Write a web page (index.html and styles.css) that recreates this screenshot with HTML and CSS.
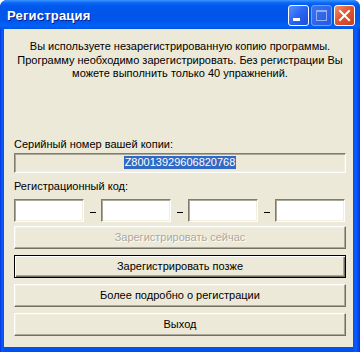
FILE: index.html
```html
<!DOCTYPE html>
<html lang="ru">
<head>
    <meta charset="UTF-8">
    <title>Регистрация</title>
    <link rel="stylesheet" href="styles.css">
</head>
<body>
    <div class="window">
        <div class="titlebar">
            <span class="title">Регистрация</span>
            <div class="title-buttons">
                <div class="tbtn tbtn-min">
                    <svg width="21" height="21" viewBox="0 0 21 21"><rect x="5" y="13" width="7" height="3" fill="#fff"/></svg>
                </div>
                <div class="tbtn tbtn-max">
                    <svg width="21" height="21" viewBox="0 0 21 21"><rect x="5.5" y="5.5" width="10" height="10" fill="none" stroke="#8fb0f0" stroke-width="1"/><rect x="5" y="5" width="11" height="2" fill="#8fb0f0"/></svg>
                </div>
                <div class="tbtn tbtn-close">
                    <svg width="21" height="21" viewBox="0 0 21 21"><path d="M6 6 L15 15 M15 6 L6 15" stroke="#fff" stroke-width="2" stroke-linecap="square"/></svg>
                </div>
            </div>
        </div>

        <div class="client">
            <p class="notice">Вы используете незарегистрированную копию программы. Программу необходимо зарегистрировать. Без регистрации Вы можете выполнить только 40 упражнений.</p>

            <div class="label label-serial">Серийный номер вашей копии:</div>
            <div class="field field-readonly"><span class="selected">Z80013929606820768</span></div>

            <div class="label label-code">Регистрационный код:</div>
            <div class="code-row">
                <div class="field code-box"></div>
                <span class="dash"></span>
                <div class="field code-box"></div>
                <span class="dash"></span>
                <div class="field code-box"></div>
                <span class="dash"></span>
                <div class="field code-box"></div>
            </div>

            <div class="buttons">
                <div class="btn btn-disabled">Зарегистрировать сейчас</div>
                <div class="btn btn-default">Зарегистрировать позже</div>
                <div class="btn">Более подробно о регистрации</div>
                <div class="btn">Выход</div>
            </div>
        </div>
    </div>
</body>
</html>
```

FILE: styles.css
```css
html, body {
    margin: 0;
    padding: 0;
}
body {
    width: 360px;
    height: 352px;
    overflow: hidden;
    background-color: #ffffff;
    font-family: "Liberation Sans", Arial, sans-serif;
    font-size: 11px;
    color: #000;
}
.window {
    width: 360px;
    height: 352px;
    box-sizing: border-box;
    background: linear-gradient(to right, #0831d9 0px, #0a5dff 2px, #0050ee 4px, #0050ee 353px, #0a5dff 356px, #0831d9 360px);
    border-radius: 7px 7px 0 0;
    display: flex;
    flex-direction: column;
}
.titlebar {
    height: 29px;
    flex: none;
    display: flex;
    align-items: center;
    justify-content: space-between;
    padding: 0 5px 0 7px;
    border-radius: 7px 7px 0 0;
    background: linear-gradient(to bottom, #3d95ff 0px, #0a66f5 3px, #0058ee 6px, #0055e8 14px, #0058ee 22px, #0063f8 26px, #0054e3 29px);
}
.title {
    color: #fff;
    font-weight: bold;
    font-size: 13px;
    letter-spacing: 0.2px;
    text-shadow: 1px 1px 0 #0a1e80;
    padding-top: 1px;
}
.title-buttons {
    display: flex;
    gap: 2px;
    padding-top: 1px;
}
.tbtn {
    width: 21px;
    height: 21px;
    box-sizing: border-box;
    border: 1px solid #fff;
    border-radius: 3px;
    overflow: hidden;
}
.tbtn svg {
    display: block;
    margin: -1px;
}
.tbtn-min {
    background: linear-gradient(135deg, #5a8fff 0%, #2a64f0 50%, #1a4fd8 100%);
}
.tbtn-max {
    border-color: #7a9ef0;
    background: linear-gradient(135deg, #3e74f0 0%, #2458e4 100%);
}
.tbtn-close {
    background: linear-gradient(135deg, #f0926c 0%, #e0562f 45%, #c8401c 100%);
}
.client {
    margin: 0 7px 5px 4px;
    flex: 1;
    background-color: #ece9d8;
    padding: 11px 7px 0 10px;
}
.notice {
    margin: 0;
    text-align: center;
    line-height: 13.5px;
    padding: 0 2px;
}
.label {
    line-height: 13px;
}
.label-serial {
    margin-top: 57px;
}
.label-code {
    margin-top: 7px;
}
.field {
    box-sizing: border-box;
    border-top: 1px solid #7f7c6e;
    border-left: 1px solid #7f7c6e;
    border-right: 1px solid #ffffff;
    border-bottom: 1px solid #ffffff;
    box-shadow: inset 1px 1px 0 #aca899, inset -1px -1px 0 #f1efe2;
}
.field-readonly {
    margin-top: 2px;
    height: 20px;
    background-color: #ece9d8;
    display: flex;
    align-items: center;
    justify-content: center;
}
.selected {
    background-color: #316ac5;
    color: #fff;
    line-height: 13px;
    padding: 0 1px;
}
.code-row {
    margin-top: 6px;
    display: flex;
    align-items: center;
    justify-content: space-between;
    padding-right: 1px;
}
.code-box {
    width: 70px;
    height: 23px;
    background-color: #fff;
}
.dash {
    width: 6px;
    height: 1px;
    background-color: #000;
    margin-top: 4px;
}
.buttons {
    margin-top: 4px;
    display: flex;
    flex-direction: column;
    gap: 6px;
}
.btn {
    height: 23px;
    box-sizing: border-box;
    display: flex;
    align-items: center;
    justify-content: center;
    background-color: #ece9d8;
    border-top: 1px solid #fff;
    border-left: 1px solid #fff;
    border-right: 1px solid #716f64;
    border-bottom: 1px solid #716f64;
    box-shadow: inset -1px -1px 0 #aca899, inset 1px 1px 0 #f1efe2;
}
.btn-disabled {
    color: #aca899;
    text-shadow: 1px 1px 0 #fff;
}
.btn-default {
    border: 1px solid #000;
    box-shadow: inset 1px 1px 0 #fff, inset -1px -1px 0 #716f64, inset -2px -2px 0 #aca899;
}
```
